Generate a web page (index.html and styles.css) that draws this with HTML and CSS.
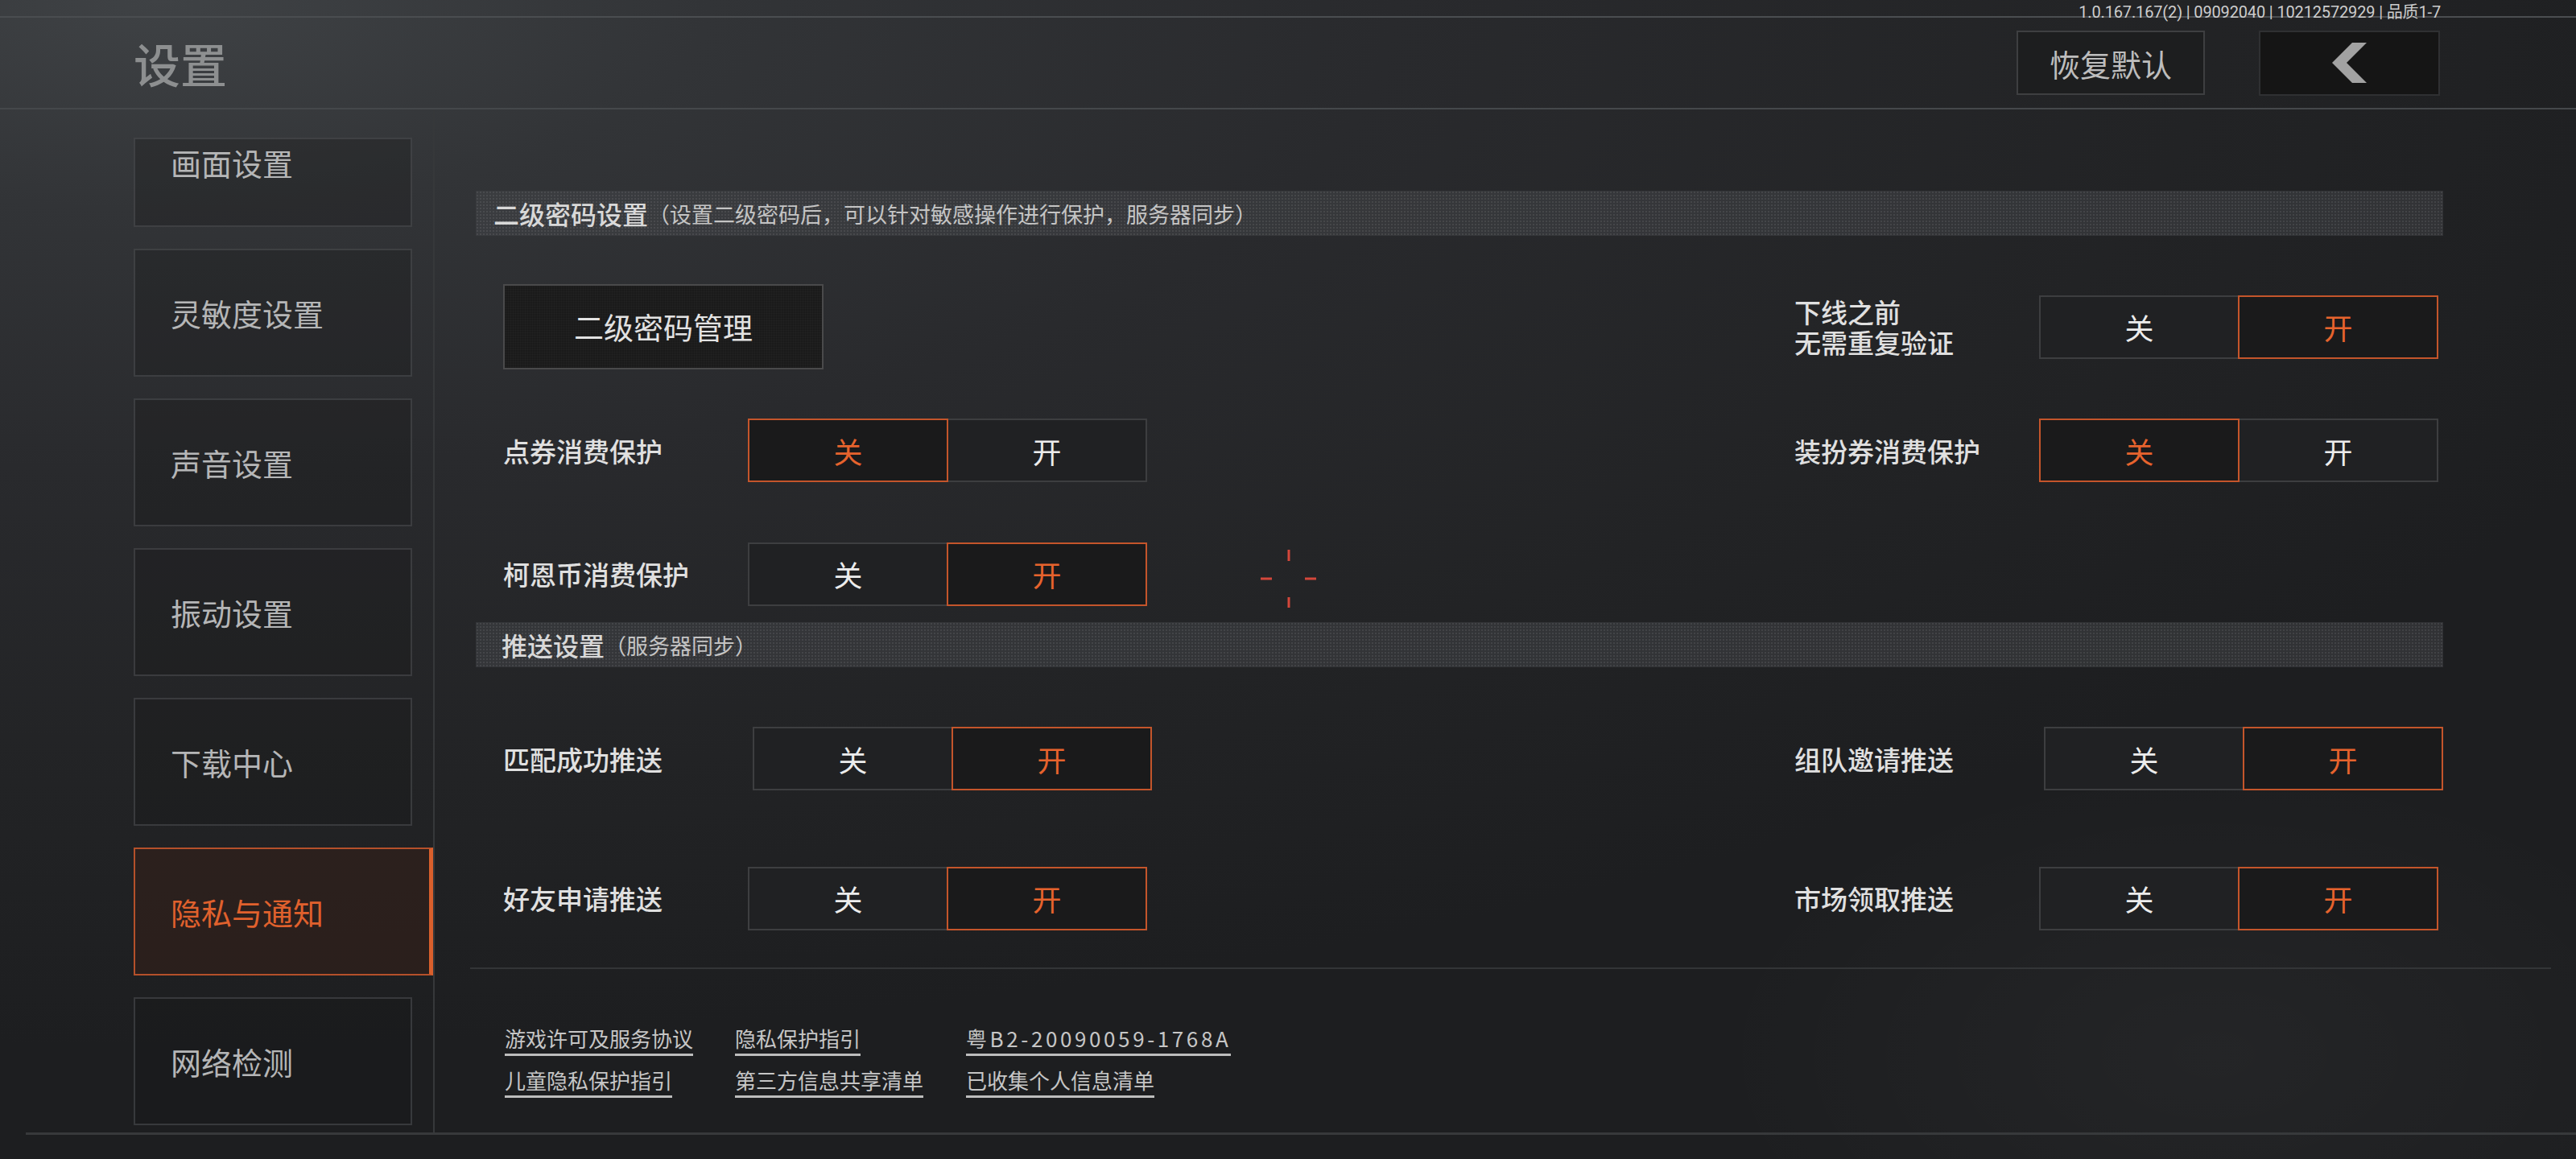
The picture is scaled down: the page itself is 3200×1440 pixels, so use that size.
FILE: index.html
```html
<!DOCTYPE html>
<html lang="zh-CN">
<head>
<meta charset="utf-8">
<title>设置</title>
<link rel="stylesheet" href="styles.css">
</head>
<body>
<div class="screen">
  <div class="version">1.0.167.167(2) | 09092040 | 10212572929 | 品质1-7</div>

  <header class="topbar">
    <h1 class="title">设置</h1>
    <div class="actions">
      <button class="btn btn-reset">恢复默认</button>
      <button class="btn btn-back" aria-label="返回">
        <svg class="chev" viewBox="0 0 43 50" width="43" height="50"><polygon points="25,0 43,0 18,25 43,50 25,50 0,25"/></svg>
      </button>
    </div>
  </header>

  <div class="body">
    <nav class="sidebar">
      <div class="nav-item partial">画面设置</div>
      <div class="nav-item">灵敏度设置</div>
      <div class="nav-item">声音设置</div>
      <div class="nav-item">振动设置</div>
      <div class="nav-item">下载中心</div>
      <div class="nav-item active">隐私与通知</div>
      <div class="nav-item">网络检测</div>
    </nav>

    <main class="content">
      <div class="section-bar">
        <span class="sec-title">二级密码设置</span><span class="sec-note">（设置二级密码后，可以针对敏感操作进行保护，服务器同步）</span>
      </div>

      <div class="rows">
        <div class="row row-a">
          <div class="cell left">
            <button class="pwd-btn">二级密码管理</button>
          </div>
          <div class="cell">
            <div class="label two">
              <span class="ln">下线之前</span>
              <span class="ln">无需重复验证</span>
            </div>
            <div class="toggle"><span class="seg">关</span><span class="seg on">开</span></div>
          </div>
        </div>

        <div class="row row-b">
          <div class="cell left">
            <div class="label">点券消费保护</div>
            <div class="toggle"><span class="seg on">关</span><span class="seg">开</span></div>
          </div>
          <div class="cell">
            <div class="label">装扮券消费保护</div>
            <div class="toggle"><span class="seg on">关</span><span class="seg">开</span></div>
          </div>
        </div>

        <div class="row row-c">
          <div class="cell left">
            <div class="label">柯恩币消费保护</div>
            <div class="toggle"><span class="seg">关</span><span class="seg on">开</span></div>
          </div>
          <div class="cell"></div>
        </div>
      </div>

      <div class="section-bar bar2">
        <span class="sec-title">推送设置</span><span class="sec-note">（服务器同步）</span>
      </div>

      <div class="rows">
        <div class="row row-d">
          <div class="cell left">
            <div class="label">匹配成功推送</div>
            <div class="toggle shift"><span class="seg">关</span><span class="seg on">开</span></div>
          </div>
          <div class="cell">
            <div class="label">组队邀请推送</div>
            <div class="toggle shift"><span class="seg">关</span><span class="seg on">开</span></div>
          </div>
        </div>

        <div class="row row-e">
          <div class="cell left">
            <div class="label">好友申请推送</div>
            <div class="toggle"><span class="seg">关</span><span class="seg on">开</span></div>
          </div>
          <div class="cell">
            <div class="label">市场领取推送</div>
            <div class="toggle"><span class="seg">关</span><span class="seg on">开</span></div>
          </div>
        </div>
      </div>

      <div class="divider"></div>

      <div class="links">
        <a class="link">游戏许可及服务协议</a>
        <a class="link">隐私保护指引</a>
        <a class="link wide">粤B2-20090059-1768A</a>
        <a class="link">儿童隐私保护指引</a>
        <a class="link">第三方信息共享清单</a>
        <a class="link">已收集个人信息清单</a>
      </div>
    </main>
  </div>

  <div class="bottom-line"></div>

  <svg class="crosshair" viewBox="0 0 74 76" width="74" height="76">
    <line x1="37" y1="2" x2="37" y2="16"/>
    <line x1="37" y1="61" x2="37" y2="74"/>
    <line x1="2" y1="38" x2="16" y2="38"/>
    <line x1="57" y1="38" x2="71" y2="38"/>
  </svg>
</div>
</body>
</html>
```

FILE: styles.css
```css
* { box-sizing: border-box; }

html, body {
  margin: 0;
  padding: 0;
}

body {
  width: 3200px;
  height: 1440px;
  overflow: hidden;
  background: #1d1e20;
  font-family: "Noto Sans CJK SC", "Noto Sans", "Liberation Sans", sans-serif;
}

.screen {
  position: relative;
  width: 3200px;
  height: 1440px;
  overflow: hidden;
  background:
    radial-gradient(ellipse 900px 520px at 2750px 1310px, rgba(255,255,255,0.03), transparent 70%),
    radial-gradient(ellipse 3400px 1300px at 200px 0px, #3f4245 0%, #323437 20%, #292a2d 45%, #222325 75%, #1d1e20 100%);
}

/* ---------- header ---------- */
.version {
  position: absolute;
  top: 3px;
  right: 168px;
  font-family: Roboto, "Noto Sans CJK SC", sans-serif;
  font-size: 20px;
  letter-spacing: -0.15px;
  line-height: 24px;
  color: #cdcdcd;
  white-space: nowrap;
}

.topbar {
  margin-top: 20px;
  height: 116px;
  border-top: 2px solid #4a4d50;
  border-bottom: 2px solid #45484b;
  display: flex;
  align-items: center;
  justify-content: space-between;
  padding: 0 169px 0 166px;
}

.title {
  margin: 0;
  font-size: 58px;
  line-height: 1;
  font-weight: 500;
  color: #8d8f90;
}

.actions {
  display: flex;
  align-items: center;
  gap: 67px;
}

.btn {
  font-family: inherit;
  padding: 0;
  margin: 0;
  cursor: pointer;
  display: flex;
  align-items: center;
  justify-content: center;
}

.btn-reset {
  width: 234px;
  height: 80px;
  background: #1d1e1f;
  border: 2px solid #3e3f41;
  font-size: 38px;
  color: #bdbdbd;
}

.btn-back {
  width: 225px;
  height: 81px;
  background: #151515;
  border: 2px solid #2f3032;
}

.chev { display: block; fill: #a2a2a2; }

/* ---------- body ---------- */
.body {
  display: flex;
  height: 1271px;
}

.sidebar {
  width: 540px;
  flex: none;
  border-right: 2px solid #36383a;
  padding: 35px 0 0 166px;
  display: flex;
  flex-direction: column;
  gap: 27px;
  overflow: hidden;
}

.nav-item {
  width: 346px;
  height: 159px;
  flex: none;
  border: 2px solid rgba(80, 82, 85, 0.55);
  background: rgba(20, 20, 22, 0.28);
  display: flex;
  align-items: center;
  padding-left: 44px;
  font-size: 38px;
  line-height: 1;
  color: #b5b6b7;
}

.nav-item.partial {
  height: 111px;
  align-items: flex-start;
  padding-top: 10px;
}

.nav-item.active {
  width: 372px;
  border: 2px solid #b5502a;
  border-right: 5px solid #d95f2c;
  background: rgba(58, 32, 22, 0.45);
  color: #e0612d;
}

/* ---------- content ---------- */
.content {
  flex: 1;
  padding: 101px 165px 0 51px;
}

.section-bar {
  height: 56px;
  display: flex;
  align-items: center;
  padding-left: 22px;
  background:
    radial-gradient(circle, rgba(255,255,255,0.08) 0.8px, transparent 1.4px) 0 0 / 4px 4px,
    rgba(66, 68, 71, 0.55);
  color: #d8d8d8;
  white-space: nowrap;
}

.section-bar.bar2 { margin-top: 20px; padding-left: 32px; }

.sec-title {
  font-size: 32px;
  font-weight: 500;
  line-height: 1;
}

.sec-note {
  font-size: 27px;
  line-height: 1;
  color: #c4c4c4;
}

.rows { padding-left: 34px; }

.row {
  display: flex;
  align-items: center;
}

.row-a { margin-top: 60px; height: 106px; }
.row-b { margin-top: 61px; height: 79px; }
.row-c { margin-top: 74px; height: 80px; }
.row-d { margin-top: 74px; height: 79px; }
.row-e { margin-top: 95px; height: 78px; }

.cell {
  display: flex;
  align-items: center;
  height: 100%;
}

.cell.left { width: 1604px; flex: none; }

.label {
  width: 304px;
  flex: none;
  font-size: 33px;
  line-height: 38px;
  font-weight: 500;
  color: #e0e0e0;
}

.label.two {
  display: flex;
  flex-direction: column;
}

.ln { display: block; }

.toggle {
  display: flex;
  height: 79px;
}

.toggle.shift { margin-left: 6px; }

.seg {
  width: 249px;
  height: 100%;
  display: flex;
  align-items: center;
  justify-content: center;
  border: 2px solid #3d3e40;
  background: #202123;
  font-size: 36px;
  line-height: 1;
  color: #ececec;
  position: relative;
}

.seg + .seg { margin-left: -2px; }

.seg.on {
  border-color: #c4552b;
  background: #1a1a1b;
  color: #e6632d;
  z-index: 1;
}

.pwd-btn {
  width: 398px;
  height: 106px;
  padding: 0;
  font-family: inherit;
  font-size: 37px;
  color: #e2e2e2;
  background:
    radial-gradient(circle, rgba(255,255,255,0.035) 0.7px, transparent 1.2px) 0 0 / 3px 3px,
    #1a1a1a;
  border: 2px solid #4a4a4b;
}

.divider {
  margin: 47px -134px 0 -7px;
  height: 2px;
  background: #333537;
}

.links {
  margin-top: 71px;
  padding-left: 36px;
  display: grid;
  grid-template-columns: 286px 287px auto;
  row-gap: 15px;
  justify-items: start;
}

.link {
  display: inline-block;
  font-size: 26px;
  line-height: 30px;
  padding-bottom: 4px;
  border-bottom: 3px solid #bdbdbd;
  color: #c6c6c6;
  white-space: nowrap;
}

.link.wide { letter-spacing: 3.6px; }

.bottom-line {
  margin-left: 32px;
  height: 3px;
  background: #37393b;
}

/* overlay reticle */
.crosshair {
  position: absolute;
  left: 1564px;
  top: 681px;
  stroke: #d4473b;
  stroke-width: 3;
}
```
